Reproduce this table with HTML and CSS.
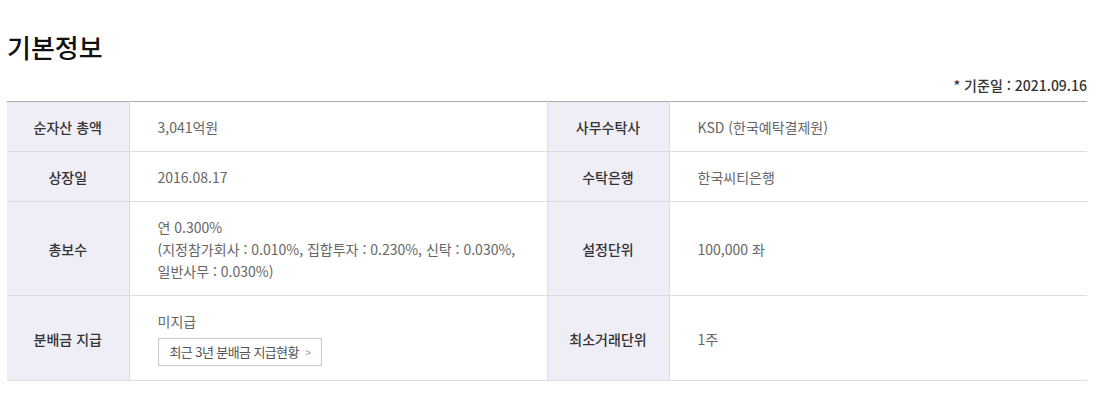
FILE: index.html
```html
<!DOCTYPE html>
<html lang="ko">
<head>
    <meta charset="UTF-8">
    <title>기본정보</title>
    <link rel="stylesheet" href="styles.css">
</head>
<body>
<div class="info">
    <h2 class="info-title">기본정보</h2>
    <p class="info-date">* 기준일 : 2021.09.16</p>

    <table class="info-table">
        <colgroup>
            <col class="col-th">
            <col class="col-td">
            <col class="col-th">
            <col>
        </colgroup>
        <tr>
            <th>순자산 총액</th>
            <td>3,041억원</td>
            <th>사무수탁사</th>
            <td>KSD (한국예탁결제원)</td>
        </tr>
        <tr>
            <th>상장일</th>
            <td>2016.08.17</td>
            <th>수탁은행</th>
            <td>한국씨티은행</td>
        </tr>
        <tr>
            <th>총보수</th>
            <td>연 0.300%<br>(지정참가회사 : 0.010%, 집합투자 : 0.230%, 신탁 : 0.030%,<br>일반사무 : 0.030%)</td>
            <th>설정단위</th>
            <td>100,000 좌</td>
        </tr>
        <tr>
            <th>분배금 지급</th>
            <td class="td-pay">
                미지급
                <div><a class="btn-more" href="#">최근 3년 분배금 지급현황 <span class="arrow">&gt;</span></a></div>
            </td>
            <th>최소거래단위</th>
            <td>1주</td>
        </tr>
    </table>
</div>
</body>
</html>
```

FILE: styles.css
```css
*{
    padding: 0;
    margin: 0;
}

html, body{
    background: #fff;
    font-family: "Noto Sans CJK KR", "Noto Sans", sans-serif;
    color: #333;
}

.info{
    width: 1080px;
    margin-left: 7px;
    padding-top: 29px;
}

.info-title{
    font-size: 26px;
    line-height: 36px;
    font-weight: 500;
    color: #111;
}

.info-date{
    margin-top: 10px;
    font-size: 14px;
    line-height: 20px;
    font-weight: 500;
    color: #333;
    text-align: right;
}

.info-table{
    width: 100%;
    margin-top: 6px;
    border-collapse: collapse;
    table-layout: fixed;
    border-top: 1px solid #aaa;
    font-size: 14px;
    line-height: 22px;
}

.col-th{
    width: 122px;
}

.col-td{
    width: 418px;
}

.info-table th,
.info-table td{
    border-bottom: 1px solid #ddd;
    padding: 14px 27px 13px 28px;
    vertical-align: middle;
}

.info-table th{
    background: #efeef6;
    border-left: 1px solid #ddd;
    border-right: 1px solid #ddd;
    font-weight: 500;
    color: #333;
    text-align: center;
    padding-left: 0;
    padding-right: 0;
}

.info-table tr th:first-child{
    border-left: none;
}

.info-table td{
    color: #666;
    text-align: left;
}

.info-table .td-pay{
    padding-bottom: 14px;
}

/* 분배금 버튼 */
.btn-more{
    display: inline-block;
    margin-top: 6px;
    height: 26px;
    line-height: 26px;
    padding: 0 10px 0 11px;
    border: 1px solid #c8c8c8;
    font-size: 13px;
    letter-spacing: -0.6px;
    color: #555;
    text-decoration: none;
}

.btn-more .arrow{
    display: inline-block;
    margin-left: 3px;
    color: #999;
    font-size: 12px;
    transform: scaleX(0.8);
}
```
